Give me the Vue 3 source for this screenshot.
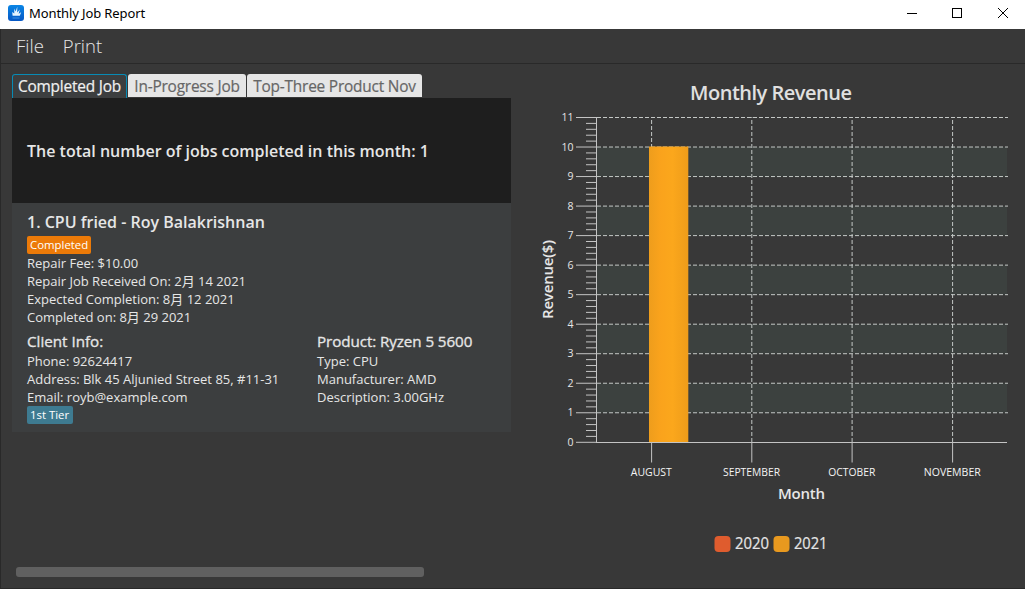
<script setup>
const tabs = ['Completed Job', 'In-Progress Job', 'Top-Three Product Nov']
const top = 117.5
const bottom = 442.3
const step = (bottom - top) / 11
const yOf = (v) => bottom - v * step
const majors = Array.from({ length: 12 }, (_, i) => i)
const minors = Array.from({ length: 56 }, (_, i) => i).filter((i) => i % 5).map((i) => i / 5)
const bands = [1, 3, 5, 7, 9]
const months = [
  { name: 'AUGUST', x: 651.6, w: 41 },
  { name: 'SEPTEMBER', x: 751.8, w: 57 },
  { name: 'OCTOBER', x: 852.1, w: 47 },
  { name: 'NOVEMBER', x: 952.6, w: 57 },
]
</script>

<template>
  <div class="window">
    <header class="titlebar">
      <svg class="logo" width="16" height="16" viewBox="0 0 16 16">
        <defs>
          <linearGradient id="logo-bg" x1="0" y1="0" x2="0" y2="1">
            <stop offset="0" stop-color="#0a86e6" />
            <stop offset="1" stop-color="#0657c4" />
          </linearGradient>
        </defs>
        <rect width="16" height="16" rx="3" fill="url(#logo-bg)" />
        <path d="M9.3 1.8L7.6 6.6 6.2 3.6 6.3 8.6 4.2 7 4.6 10.8H11.8L13.2 7.2 10.6 8.8 11.8 4.6 9.2 7.4Z" fill="#e8f5ff" />
        <path d="M4.5 13H11.5" stroke="#3f91e6" stroke-width="1" />
      </svg>
      <span class="caption">Monthly Job Report</span>
      <svg class="controls" width="104" height="12" viewBox="0 0 104 12" fill="none" stroke="#000" shape-rendering="crispEdges">
        <path d="M0 5.5H10" />
        <rect x="45.5" y=".5" width="9" height="9" />
        <path d="M91 0L101 10M101 0L91 10" shape-rendering="auto" />
      </svg>
    </header>
    <nav class="menubar"><span>File</span><span>Print</span></nav>
    <main class="content">
      <section class="left">
        <div class="tabs">
          <div v-for="(t, i) in tabs" :key="t" class="tab" :class="['tab-' + i, { active: i === 0 }]"><span>{{ t }}</span></div>
        </div>
        <div class="summary">The total number of jobs completed in this month: 1</div>
        <article class="job">
          <h2>1. CPU fried - Roy Balakrishnan</h2>
          <span class="tag orange">Completed</span>
          <div class="row">Repair Fee: $10.00</div>
          <div class="row">Repair Job Received On: 2月 14 2021</div>
          <div class="row">Expected Completion: 8月 12 2021</div>
          <div class="row">Completed on: 8月 29 2021</div>
          <div class="columns">
            <div>
              <h3>Client Info:</h3>
              <div class="row">Phone: 92624417</div>
              <div class="row">Address: Blk 45 Aljunied Street 85, #11-31</div>
              <div class="row">Email: royb@example.com</div>
              <span class="tag teal">1st Tier</span>
            </div>
            <div>
              <h3 class="product">Product: Ryzen 5 5600</h3>
              <div class="row">Type: CPU</div>
              <div class="row">Manufacturer: AMD</div>
              <div class="row">Description: 3.00GHz</div>
            </div>
          </div>
        </article>
        <div class="scrollbar"></div>
      </section>
      <svg class="chart" width="502" height="524" viewBox="523 64 502 524">
        <defs>
          <linearGradient id="bar-fill">
            <stop offset="0" stop-color="#ee9d1c" />
            <stop offset=".3" stop-color="#faa31c" />
            <stop offset=".6" stop-color="#fba71c" />
            <stop offset="1" stop-color="#ee9c1a" />
          </linearGradient>
        </defs>
        <text class="title" x="771" y="100" textLength="162">Monthly Revenue</text>
        <rect v-for="b in bands" :key="b" x="597" :y="yOf(b + 1)" width="410" :height="step" fill="#3c413f" />
        <g stroke="#c4c8c6" stroke-width="1" stroke-dasharray="4 2">
          <line v-for="m in majors.slice(1)" :key="m" x1="597" x2="1008" :y1="yOf(m)" :y2="yOf(m)" />
          <line v-for="m in months" :key="m.name" :x1="m.x" :x2="m.x" y1="442" y2="117" />
        </g>
        <rect x="649" y="146.5" width="39.3" height="295.5" fill="url(#bar-fill)" />
        <g stroke="#c4c4c4" stroke-width="1">
          <line v-for="m in majors" :key="m" x1="576" x2="597" :y1="yOf(m)" :y2="yOf(m)" />
          <line v-for="m in minors" :key="m" x1="586" x2="597" :y1="yOf(m)" :y2="yOf(m)" />
          <line x1="596.5" x2="596.5" y1="117" y2="442" />
          <line x1="596" x2="1007" y1="442.5" y2="442.5" />
          <line v-for="m in months" :key="m.name" :x1="m.x" :x2="m.x" y1="442" y2="462.5" />
        </g>
        <text v-for="m in majors" :key="m" class="num" x="573.5" :y="yOf(m) + 3.7">{{ m }}</text>
        <text v-for="m in months" :key="m.name" class="month" :x="m.x - .3" y="476" :textLength="m.w" lengthAdjust="spacingAndGlyphs">{{ m.name }}</text>
        <text class="axis" x="801.5" y="499" textLength="47">Month</text>
        <text class="axis" transform="translate(552.5 279.5) rotate(-90)" textLength="79">Revenue($)</text>
        <rect x="714.5" y="536" width="16" height="16" rx="4" fill="#df5c2e" />
        <text class="legend" x="735" y="549.4" textLength="34" lengthAdjust="spacingAndGlyphs">2020</text>
        <rect x="773.5" y="536" width="16" height="16" rx="4" fill="#e8991f" />
        <text class="legend" x="794" y="549.4" textLength="33.5" lengthAdjust="spacingAndGlyphs">2021</text>
      </svg>
    </main>
  </div>
</template>

<style>
body { margin: 0; overflow: hidden; }
</style>

<style scoped>
* { box-sizing: border-box; }
.window { width: 1025px; height: 589px; background: #383838; font-family: "Open Sans", "Noto Sans CJK SC", sans-serif; color: #e6e6e6; overflow: hidden; white-space: nowrap; }
.titlebar { height: 29px; background: #fff; display: flex; align-items: flex-start; padding-left: 8px; }
.logo { margin-top: 5px; }
.caption { margin: 4px 0 0 5px; font: 13px/18px "Noto Sans", sans-serif; color: #000; letter-spacing: -.1px; }
.controls { margin: 8px 14px 0 auto; }
.menubar { height: 35px; display: flex; gap: 19px; font-size: 18.5px; line-height: 34px; font-weight: 300; border-bottom: 1px solid #292929; border-left: 1px solid #292929; padding-left: 15px; }
.content { height: 525px; display: flex; justify-content: space-between; border-left: 1px solid #292929; border-bottom: 1px solid #292929; }
.left { width: 499px; margin-left: 11px; display: flex; flex-direction: column; padding-top: 10px; }
.tabs { display: flex; gap: 1px; height: 24px; }
.tab { height: 23px; background: #e6e6e6; color: #666; font-size: 15.4px; letter-spacing: -.19px; -webkit-text-stroke: .2px currentColor; line-height: 25px; border-radius: 3px 3px 0 0; text-align: center; }
.tab-0 { width: 115px; }
.tab-1 { width: 118px; }
.tab-2 { width: 175px; }
.active { background: #3c3e3f; color: #f0f0f0; border: 1px solid #078bb5; border-bottom: 0; line-height: 23px; height: 24px; }
.summary { height: 105px; background: #1e1e1e; padding-left: 15px; font-size: 16px; line-height: 106px; font-weight: 600; }
.job { height: 229px; background: #3c3e3f; padding: 8px 15px 0; }
h2 { margin: 0; font-size: 16px; font-weight: 600; line-height: 22px; height: 25px; }
h3 { margin: 0; font-size: 15.2px; font-weight: 400; -webkit-text-stroke: .3px currentColor; line-height: 21px; height: 21px; }
.product { letter-spacing: -.08px; }
.tag { display: block; width: max-content; height: 18px; border-radius: 2px; padding: 0 3px; font-size: 11.4px; line-height: 18px; color: #fff; }
.orange { background: #ec7a08; }
.teal { background: #3e7b91; padding-right: 4px; }
.row { font-size: 13px; line-height: 18px; height: 18px; }
.columns { display: grid; grid-template-columns: 290px 1fr; margin-top: 5px; }
.scrollbar { width: 408px; height: 10px; border-radius: 3px; background: #606060; margin: auto 0 11px 4px; }
.chart { flex: none; }
.chart text { fill: #e6e6e6; text-anchor: middle; }
.chart .title { font-size: 20px; font-weight: 600; fill: #e0e0e0; }
.chart .num { font-size: 10.5px; text-anchor: end; }
.chart .month { font-size: 10.5px; fill: #f4f4f4; }
.chart .axis { font-size: 15px; font-weight: 600; }
.chart .legend { font-size: 15.5px; text-anchor: start; stroke: #e6e6e6; stroke-width: .2px; }
</style>
